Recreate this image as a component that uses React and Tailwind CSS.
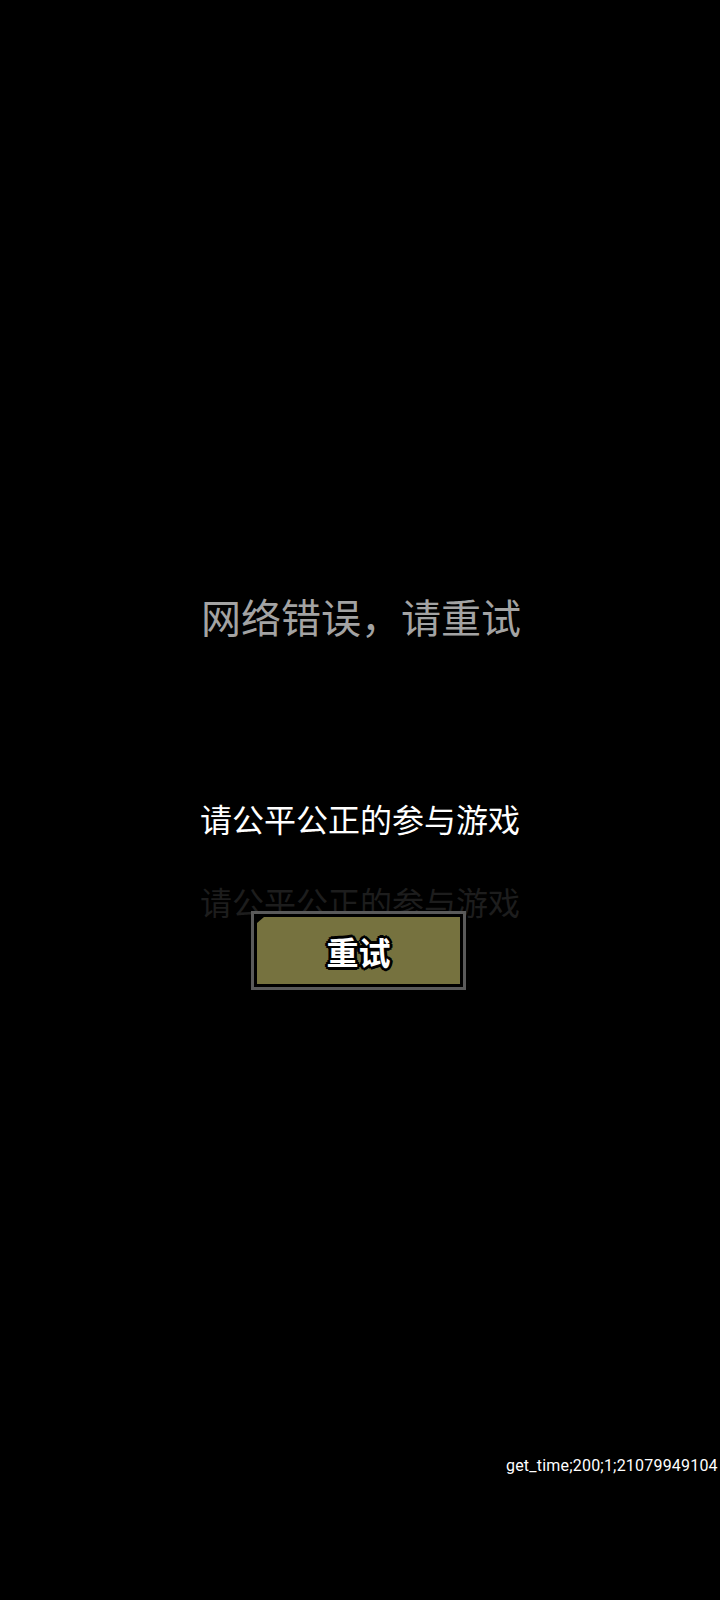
export default function App() {
  const cjk = { fontFamily: '"Noto Sans CJK SC", "Noto Sans", sans-serif' };
  return (
    <div className="w-full min-h-[1600px] h-[1600px] bg-black flex flex-col items-center overflow-hidden" style={cjk}>
      <div className="h-[596px] shrink-0" />
      <div className="h-[40px] leading-[40px] text-[40px] text-[#a3a3a3] whitespace-nowrap pl-[2px]">
        网络错误，请重试
      </div>
      <div className="h-[166px] shrink-0" />
      <div className="h-[32px] leading-[32px] text-[32px] text-white whitespace-nowrap">
        请公平公正的参与游戏
      </div>
      <div className="h-[51px] shrink-0" />
      <div className="h-[26px] leading-[32px] text-[32px] text-[#1d1d1d] whitespace-nowrap">
        请公平公正的参与游戏
      </div>
      <div className="relative mr-[3px] w-[215px] h-[79px] border-[3px] border-[#5a5a5a] bg-black p-[3px] shrink-0">
        <div className="w-full h-full bg-[#76723f] flex items-center justify-center [clip-path:polygon(7px_0,100%_0,100%_100%,0_100%,0_6px)]">
          <span
            className="text-[32px] leading-[32px] font-bold text-white [text-shadow:2px_0_0_#000,-2px_0_0_#000,0_2px_0_#000,0_-2px_0_#000,2px_2px_0_#000,-2px_-2px_0_#000,2px_-2px_0_#000,-2px_2px_0_#000,3px_0_0_#000,-3px_0_0_#000,0_3px_0_#000,0_-3px_0_#000]"
          >
            重试
          </span>
        </div>
      </div>
      <div className="h-[466px] shrink-0" />
      <div className="w-full pl-[506px] whitespace-nowrap text-[16px] tracking-[0.2px] leading-[20px] text-white" style={{ fontFamily: 'Roboto, "Noto Sans", sans-serif' }}>
        get_time;200;1;21079949104
      </div>
    </div>
  );
}
